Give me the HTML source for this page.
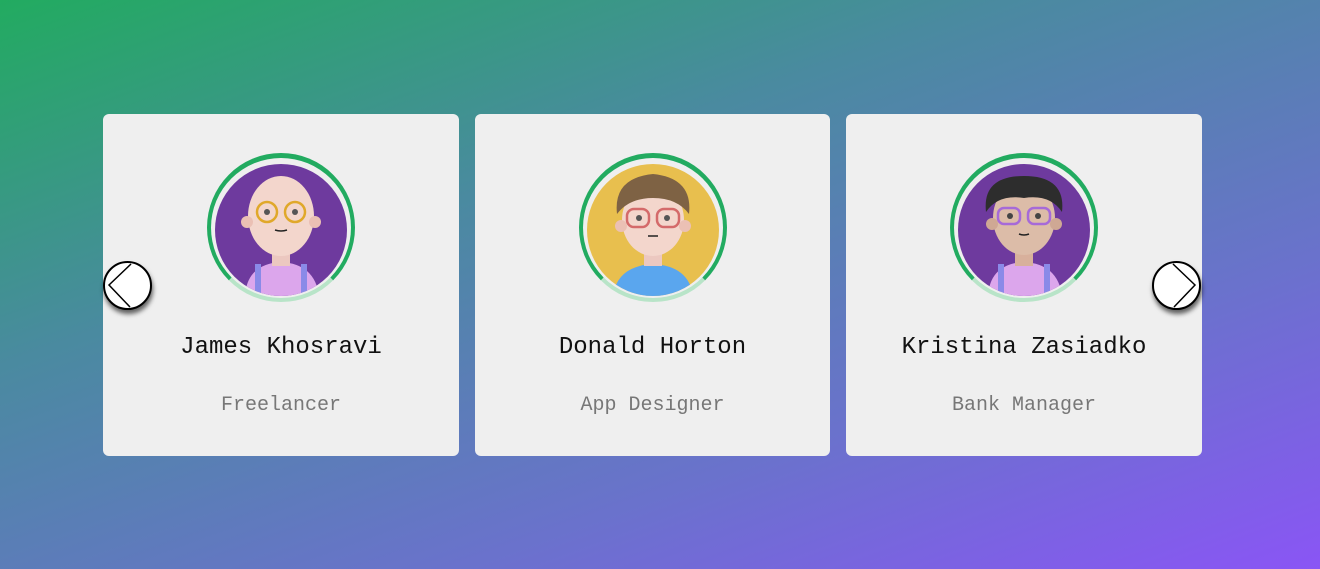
<!DOCTYPE html>
<html><head><style>
html,body{margin:0;padding:0;width:1320px;height:569px;overflow:hidden}
body{background:linear-gradient(160deg,#22ab60 0%,#4a8aa0 35%,#6a72cc 70%,#8a55f5 100%);font-family:"Courier New","Liberation Mono",monospace;position:relative}
.card{position:absolute;top:114px;width:356px;height:342px;background:#efefef;border-radius:6px;text-align:center}
.ring{position:absolute;left:104px;top:39px;width:140px;height:140px;border-radius:50%;border:4px solid #22ab60;border-bottom-color:#b8e4c8;border-top-width:5px}
.ring svg{position:absolute;left:4px;top:6px;border-radius:50%}
.name{position:absolute;top:220px;left:0;right:0;font-size:24px;line-height:28px;color:#111}
.role{position:absolute;top:280px;left:0;right:0;font-size:20px;line-height:24px;color:#777}
.btn{position:absolute;top:261px;width:45px;height:45px;border:2px solid #000;border-radius:50%;background:#fff;box-shadow:1px 4px 5px rgba(0,0,0,.6);overflow:hidden}
</style></head><body>
<div class="card" style="left:103px"><div class="ring"><svg width="132" height="132" viewBox="0 0 132 132"><rect width="132" height="132" fill="#6e3a9e"/><path d="M30 132 Q32 100 66 98 Q100 100 104 132Z" fill="#dca6ec"/><rect x="40" y="100" width="6" height="30" fill="#8a8ae8"/><rect x="86" y="100" width="6" height="30" fill="#8a8ae8"/><rect x="57" y="80" width="18" height="22" fill="#ecc8c0"/><ellipse cx="66" cy="52" rx="33" ry="40" fill="#f3d6cc"/><circle cx="32" cy="58" r="6" fill="#ebc0b4"/><circle cx="100" cy="58" r="6" fill="#ebc0b4"/><circle cx="52" cy="48" r="10" fill="none" stroke="#e0a82a" stroke-width="2.5"/><circle cx="80" cy="48" r="10" fill="none" stroke="#e0a82a" stroke-width="2.5"/><circle cx="52" cy="48" r="3" fill="#555"/><circle cx="80" cy="48" r="3" fill="#555"/><path d="M60 66 Q66 68 72 66" stroke="#222" stroke-width="1.5" fill="none"/></svg></div>
<div class="name">James Khosravi</div><div class="role">Freelancer</div></div>

<div class="card" style="left:475px;width:355px"><div class="ring"><svg width="132" height="132" viewBox="0 0 132 132"><rect width="132" height="132" fill="#e8bf4e"/><path d="M26 132 Q30 102 66 100 Q102 102 106 132Z" fill="#5aa6ee"/><rect x="57" y="82" width="18" height="20" fill="#ecc8c0"/><ellipse cx="66" cy="56" rx="31" ry="36" fill="#f3d6cc"/><circle cx="34" cy="62" r="6" fill="#ebc0b4"/><circle cx="98" cy="62" r="6" fill="#ebc0b4"/><path d="M30 50 Q26 14 66 10 Q106 14 102 50 Q90 34 66 34 Q42 34 30 50Z" fill="#7e6244"/><rect x="40" y="45" width="22" height="18" rx="7" fill="none" stroke="#d46a6a" stroke-width="2.5"/><rect x="70" y="45" width="22" height="18" rx="7" fill="none" stroke="#d46a6a" stroke-width="2.5"/><circle cx="52" cy="54" r="3" fill="#555"/><circle cx="80" cy="54" r="3" fill="#555"/><path d="M61 72 L71 72" stroke="#222" stroke-width="1.5"/></svg></div>
<div class="name">Donald Horton</div><div class="role">App Designer</div></div>

<div class="card" style="left:846px"><div class="ring"><svg width="132" height="132" viewBox="0 0 132 132"><rect width="132" height="132" fill="#6e3a9e"/><path d="M30 132 Q32 100 66 98 Q100 100 104 132Z" fill="#dca6ec"/><rect x="40" y="100" width="6" height="30" fill="#8a8ae8"/><rect x="86" y="100" width="6" height="30" fill="#8a8ae8"/><rect x="57" y="80" width="18" height="22" fill="#d8b09c"/><ellipse cx="66" cy="54" rx="31" ry="37" fill="#dcbca8"/><circle cx="34" cy="60" r="6" fill="#cfa894"/><circle cx="98" cy="60" r="6" fill="#cfa894"/><path d="M28 48 Q24 12 66 12 Q108 12 104 48 Q92 30 66 34 Q40 30 28 48Z" fill="#2d2d2d"/><rect x="40" y="44" width="22" height="16" rx="6" fill="none" stroke="#a66ad8" stroke-width="2.5"/><rect x="70" y="44" width="22" height="16" rx="6" fill="none" stroke="#a66ad8" stroke-width="2.5"/><circle cx="52" cy="52" r="3" fill="#444"/><circle cx="80" cy="52" r="3" fill="#444"/><path d="M61 70 Q66 72 71 70" stroke="#222" stroke-width="1.5" fill="none"/></svg></div>
<div class="name">Kristina Zasiadko</div><div class="role">Bank Manager</div></div>

<div class="btn" style="left:103px"><svg width="45" height="45"><polyline points="26,1 4,22 25,44" fill="none" stroke="#000" stroke-width="1.5"/></svg></div>
<div class="btn" style="left:1152px"><svg width="45" height="45"><polyline points="19,1 41,22 20,44" fill="none" stroke="#000" stroke-width="1.5"/></svg></div>
</body></html>
